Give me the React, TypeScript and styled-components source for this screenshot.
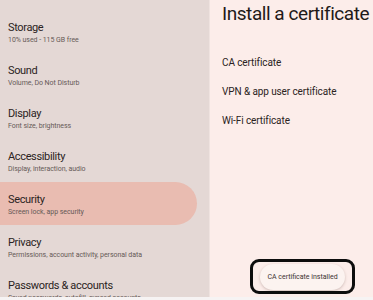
import React from "react";
import styled, { createGlobalStyle } from "styled-components";

const Global = createGlobalStyle`
  html, body { margin: 0; padding: 0; }
  body {
    width: 373px;
    height: 300px;
    overflow: hidden;
    background: #f4f1f1;
    font-family: Roboto, "Noto Sans", sans-serif;
  }
`;

const Screen = styled.div`
  display: flex;
  flex-direction: column;
  width: 373px;
  height: 300px;
`;

const Main = styled.div`
  display: flex;
  height: 297px;
  overflow: hidden;
`;

const BottomBand = styled.div`
  flex: 1;
  background: #f6f3f3;
`;

const Sidebar = styled.nav`
  width: 209px;
  flex-shrink: 0;
  background: #e4d8d5;
  padding-top: 10px;
  display: flex;
  flex-direction: column;
`;

const Row = styled.div<{ $active?: boolean }>`
  box-sizing: border-box;
  height: 43px;
  flex-shrink: 0;
  width: 197px;
  padding: 11px 0 0 8px;
  border-radius: 0 22px 22px 0;
  background: ${(p) => (p.$active ? "#e9bcb1" : "transparent")};
`;

const RowTitle = styled.div`
  font-size: 11px;
  line-height: 13px;
  letter-spacing: -0.35px;
  color: #2b2322;
`;

const RowSub = styled.div`
  font-size: 7px;
  line-height: 9px;
  margin-top: 2px;
  letter-spacing: -0.05px;
  color: #665a57;
  white-space: nowrap;
`;

const Detail = styled.section`
  position: relative;
  flex: 1;
  background: #fcedea;
  border-left: 1px solid #efe3e0;
  padding-left: 12px;
`;

const Title = styled.h1`
  margin: 3px 0 0;
  font-size: 19px;
  line-height: 22px;
  font-weight: 400;
  letter-spacing: -0.45px;
  color: #1f1a19;
  white-space: nowrap;
`;

const OptionList = styled.div`
  display: flex;
  flex-direction: column;
  margin-top: 23px;
`;

const Option = styled.div`
  font-size: 10px;
  line-height: 29px;
  letter-spacing: -0.1px;
  color: #2b2322;
  white-space: nowrap;
`;

const Toast = styled.div`
  position: absolute;
  left: 50px;
  top: 264px;
  width: 85px;
  height: 26px;
  border-radius: 13px;
  background: #fcf3f0;
  box-shadow: 0 1px 3px rgba(90, 60, 55, 0.28);
  display: flex;
  align-items: center;
  justify-content: center;
  font-size: 7px;
  color: #3d3432;
  white-space: nowrap;
`;

const Annotation = styled.div`
  position: absolute;
  left: 40px;
  top: 259px;
  width: 105px;
  height: 35px;
  box-sizing: border-box;
  border: 3px solid #0d0d0d;
  border-radius: 9px;
  pointer-events: none;
`;

const items = [
  { title: "Storage", sub: "10% used - 115 GB free" },
  { title: "Sound", sub: "Volume, Do Not Disturb" },
  { title: "Display", sub: "Font size, brightness" },
  { title: "Accessibility", sub: "Display, interaction, audio" },
  { title: "Security", sub: "Screen lock, app security", active: true },
  { title: "Privacy", sub: "Permissions, account activity, personal data" },
  { title: "Passwords & accounts", sub: "Saved passwords, autofill, synced accounts" },
];

const options = ["CA certificate", "VPN & app user certificate", "Wi-Fi certificate"];

export default function App() {
  return (
    <Screen>
      <Global />
      <Main>
        <Sidebar>
          {items.map((it) => (
            <Row key={it.title} $active={it.active}>
              <RowTitle>{it.title}</RowTitle>
              <RowSub>{it.sub}</RowSub>
            </Row>
          ))}
        </Sidebar>
        <Detail>
          <Title>Install a certificate</Title>
          <OptionList>
            {options.map((o) => (
              <Option key={o}>{o}</Option>
            ))}
          </OptionList>
          <Toast>CA certificate installed</Toast>
          <Annotation />
        </Detail>
      </Main>
      <BottomBand />
    </Screen>
  );
}
